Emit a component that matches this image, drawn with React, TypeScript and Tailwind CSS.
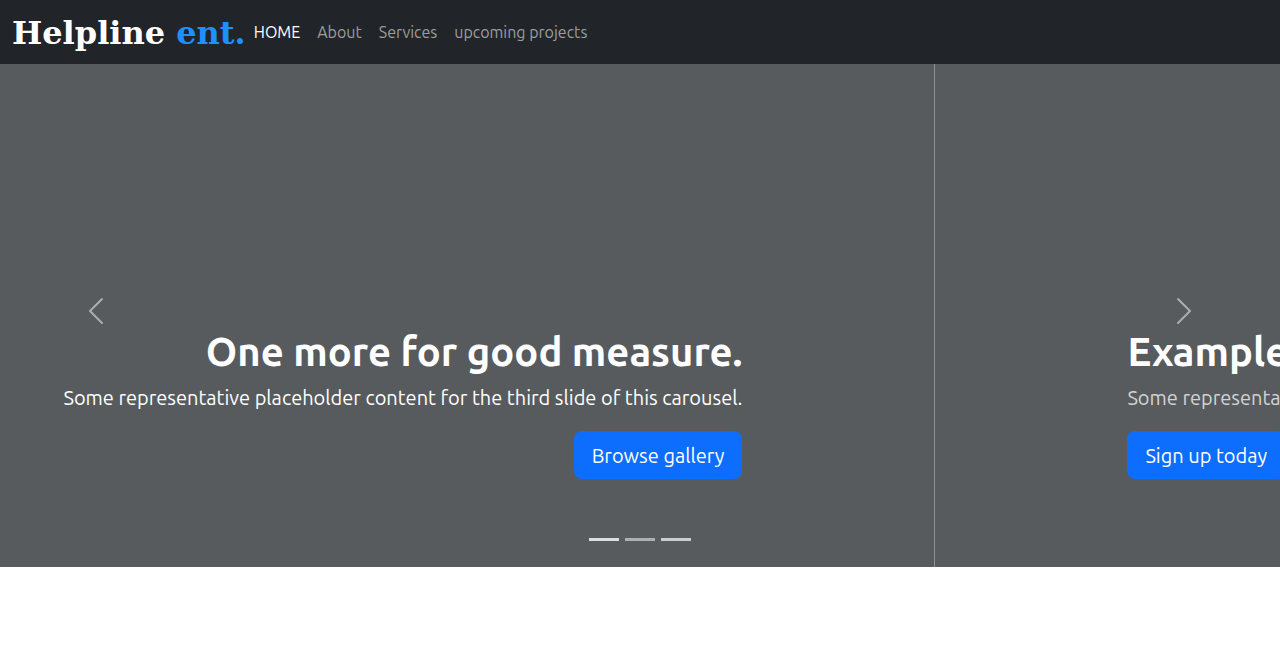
import { useState } from "react";

const links = ["About", "Services", "upcoming projects"];

const indicators = [
  { label: "Slide 1", tone: "bg-[#dcdfe0]" },
  { label: "Slide 2", tone: "bg-[#aeafb0]" },
  { label: "Slide 3", tone: "bg-[#cbcccd]" },
];

const headline = "mb-[7px] whitespace-nowrap text-[40px] font-semibold leading-[48px]";
const lead = "mb-[18px] whitespace-nowrap text-[20px] leading-[30px]";
const action =
  "flex h-12 shrink-0 items-center whitespace-nowrap rounded-lg bg-[#0d6efd] px-[18px] pt-0.5 text-[20px] leading-[30px] text-white";

function Navbar() {
  return (
    <nav className="flex h-16 items-center bg-[#212529] px-3">
      <a
        href="#home"
        className="mr-2 whitespace-nowrap pt-0.5 font-['DejaVu_Serif',serif] text-[32px] font-bold leading-[48px] text-white"
      >
        Helpline <span className="text-[#1e90ff]">ent.</span>
      </a>
      <ul className="flex items-center gap-[17px] whitespace-nowrap text-base leading-6 text-[#9b9d9e]">
        <li>
          <a href="#home" aria-current="page" className="text-white">
            HOME
          </a>
        </li>
        {links.map((name) => (
          <li key={name}>
            <a href={"#" + name.replace(" ", "-")}>{name}</a>
          </li>
        ))}
      </ul>
    </nav>
  );
}

function Carousel() {
  const [active, setActive] = useState(0);
  const step = (by: number) => setActive((active + by + 3) % 3);

  return (
    <section aria-label="Highlights" className="relative flex min-h-[503px] overflow-hidden bg-[#575b5e] text-white">
      <article className="flex w-[73%] shrink-0 flex-col items-end justify-end pb-[88px] pr-[15%] text-right">
        <h1 className={headline}>One more for good measure.</h1>
        <p className={lead}>
          Some representative placeholder content for the third slide of this carousel.
        </p>
        <a href="#gallery" className={action}>
          Browse gallery
        </a>
      </article>
      <article className="flex min-w-0 flex-1 flex-col items-start justify-end overflow-hidden border-l border-[#8d9092] pb-[88px] pl-[15%]">
        <h1 className={headline}>Example headline.</h1>
        <p className={lead + " text-[#d2d3d4]"}>
          Some representative placeholder content for the first slide of the carousel.
        </p>
        <a href="#signup" className={action}>
          Sign up today
        </a>
      </article>

      <button
        type="button"
        aria-label="Previous"
        onClick={() => step(-1)}
        className="absolute bottom-2.5 left-0 top-0 flex w-[15%] items-center justify-center opacity-50"
      >
        <svg viewBox="0 0 16 16" className="size-8" fill="#fff" aria-hidden="true">
          <path d="M11.354 1.646a.5.5 0 0 1 0 .708L5.707 8l5.647 5.646a.5.5 0 0 1-.708.708l-6-6a.5.5 0 0 1 0-.708l6-6a.5.5 0 0 1 .708 0z" />
        </svg>
      </button>
      <button
        type="button"
        aria-label="Next"
        onClick={() => step(1)}
        className="absolute bottom-2.5 right-0 top-0 flex w-[15%] items-center justify-center opacity-50"
      >
        <svg viewBox="0 0 16 16" className="size-8" fill="#fff" aria-hidden="true">
          <path d="M4.646 1.646a.5.5 0 0 1 .708 0l6 6a.5.5 0 0 1 0 .708l-6 6a.5.5 0 0 1-.708-.708L10.293 8 4.646 2.354a.5.5 0 0 1 0-.708z" />
        </svg>
      </button>
      <div className="absolute inset-x-0 bottom-[26px] flex justify-center gap-[6px]">
        {indicators.map((item, i) => (
          <button
            key={item.label}
            type="button"
            aria-label={item.label}
            aria-current={i === active}
            onClick={() => setActive(i)}
            className={"h-[3px] w-[30px] " + item.tone}
          />
        ))}
      </div>
    </section>
  );
}

export default function App() {
  return (
    <div className="bg-white font-['Ubuntu',system-ui,'Noto_Sans',sans-serif]">
      <Navbar />
      <main>
        <Carousel />
      </main>
    </div>
  );
}
